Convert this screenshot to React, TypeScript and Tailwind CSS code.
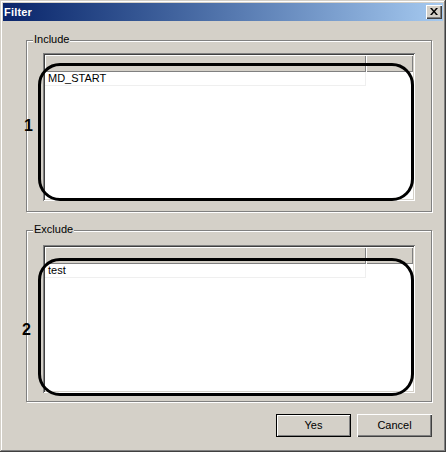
import React from "react";

type GroupProps = {
  label: string;
  item: string;
  marker: string;
  listClass: string;
  ringClass: string;
  markerClass: string;
};

function ListView({ item }: { item: string }) {
  return (
    <div className="flex flex-col w-[372px] h-[148px] p-[2px] bg-white shadow-[inset_1px_1px_0_#808080,inset_-1px_-1px_0_#ffffff,inset_2px_2px_0_#404040,inset_-2px_-2px_0_#d4d0c8]">
      <div className="flex h-[17px]">
        <div className="w-[321px] bg-[#d4d0c8] shadow-[inset_1px_1px_0_#ffffff,inset_-1px_-1px_0_#808080]" />
        <div className="flex-1 bg-[#d4d0c8] shadow-[inset_1px_1px_0_#ffffff,inset_-1px_-1px_0_#808080]" />
      </div>
      <div className="w-[321px] h-[14px] border-r border-b border-[#efefef] pl-[3px] text-[11px] leading-[13px] text-black">
        {item}
      </div>
    </div>
  );
}

function Group({ label, item, marker, listClass, ringClass, markerClass }: GroupProps) {
  return (
    <div className={"relative h-[172px] border border-[#808080] shadow-[inset_1px_1px_0_#ffffff,1px_1px_0_#ffffff] pl-[16px] " + listClass}>
      <span className="absolute left-[6px] -top-[8px] px-[1px] bg-[#d4d0c8] text-[11px] leading-[13px] text-black">
        {label}
      </span>
      <ListView item={item} />
      {/* annotation drawn over the list */}
      <div className={"absolute left-[11px] w-[376px] h-[138px] border-[3px] border-black rounded-[22px] " + ringClass} />
      <span className={"absolute text-[16px] font-bold leading-none text-black " + markerClass}>{marker}</span>
    </div>
  );
}

function Button({ label, isDefault }: { label: string; isDefault?: boolean }) {
  return (
    <button
      className={
        isDefault
          ? "w-[75px] h-[23px] border border-black bg-[#d4d0c8] text-[11px] text-black shadow-[inset_1px_1px_0_#ffffff,inset_-1px_-1px_0_#808080]"
          : "w-[75px] h-[23px] bg-[#d4d0c8] text-[11px] text-black shadow-[inset_1px_1px_0_#ffffff,inset_-1px_-1px_0_#404040,inset_-2px_-2px_0_#808080]"
      }
    >
      {label}
    </button>
  );
}

export default function App() {
  return (
    <div className="flex flex-col w-[446px] h-[452px] p-[3px] bg-[#d4d0c8] font-['Liberation_Sans',Arial,sans-serif] shadow-[inset_-1px_-1px_0_#404040,inset_1px_1px_0_#d4d0c8,inset_-2px_-2px_0_#808080,inset_2px_2px_0_#ffffff]">
      {/* title bar */}
      <div className="flex items-center justify-between h-[18px] px-[1px] bg-linear-to-r from-[#0a246a] to-[#a6caf0]">
        <span className="text-[11px] font-bold text-white leading-none tracking-[0.2px]">Filter</span>
        <div className="flex items-center justify-center w-[16px] h-[14px] bg-[#d4d0c8] shadow-[inset_1px_1px_0_#ffffff,inset_-1px_-1px_0_#404040,inset_-2px_-2px_0_#808080]">
          <svg width="8" height="7" viewBox="0 0 8 7" className="mb-[1px]">
            <path d="M0 0h2l2 2.5L6 0h2L5 3.5 8 7H6L4 4.5 2 7H0l3-3.5z" fill="black" />
          </svg>
        </div>
      </div>

      <div className="flex flex-col gap-[18px] pt-[19px] pl-[23px] pr-[11px]">
        <Group
          label="Include"
          item="MD_START"
          marker="1"
          listClass="pt-[12px]"
          ringClass="top-[22px]"
          markerClass="-left-[3px] top-[77px]"
        />
        <Group
          label="Exclude"
          item="test"
          marker="2"
          listClass="pt-[14px]"
          ringClass="top-[27px]"
          markerClass="-left-[5px] top-[91px]"
        />
      </div>

      <div className="flex justify-end gap-[6px] mt-[12px] pr-[11px]">
        <Button label="Yes" isDefault />
        <Button label="Cancel" />
      </div>
    </div>
  );
}
